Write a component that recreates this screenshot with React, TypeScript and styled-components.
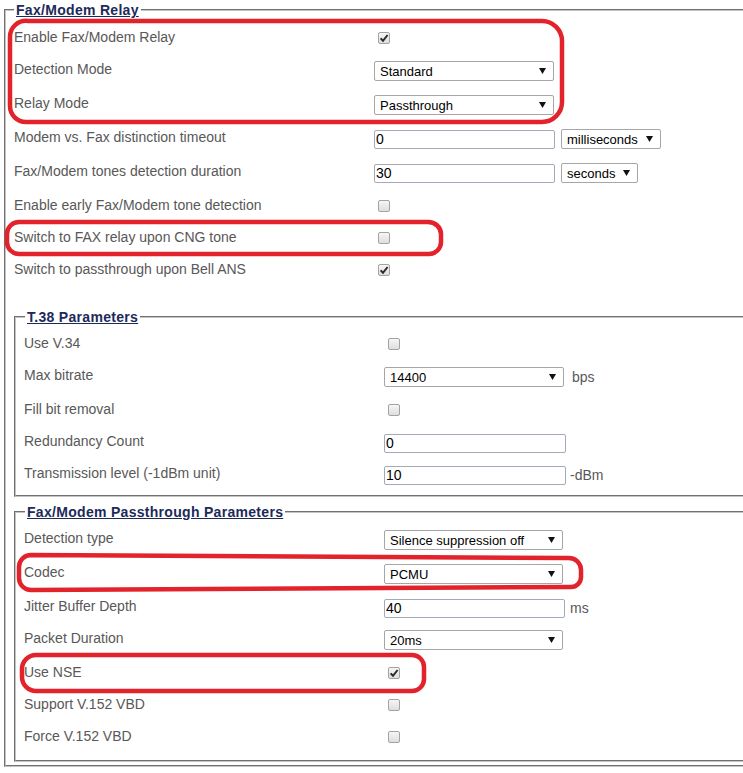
import React from 'react';
import styled, { createGlobalStyle } from 'styled-components';

const Global = createGlobalStyle`
  html, body { margin: 0; padding: 0; background: #fff; overflow: hidden; }
  body { font-family: "Liberation Sans", Arial, sans-serif; }
`;

const Page = styled.div`
  position: relative;
  width: 743px;
  height: 773px;
  overflow: hidden;
  padding: 2px 0 0 4px;
  box-sizing: border-box;
`;

const Fieldset = styled.fieldset<{ $outer?: boolean; $mt?: number }>`
  margin: ${(p) => p.$mt ?? 0}px 0 0 0;
  padding: ${(p) => (p.$outer ? '10px 0 3px 8px' : '9px 0 0 8px')};
  border: 2px groove #c4c4c4;
  width: ${(p) => (p.$outer ? 840 : 810)}px;
  min-width: 0;
  box-sizing: border-box;
`;

const Legend = styled.legend<{ $ml?: number }>`
  margin-left: ${(p) => p.$ml ?? 0}px;
  padding: 0 2px;
  font: bold 14px/16px "Liberation Sans", Arial, sans-serif;
  letter-spacing: 0.3px;
  color: #1c2a5a;
  text-decoration: underline;
`;

const Row = styled.div<{ $h: number }>`
  display: grid;
  grid-template-columns: 360px auto;
  align-items: start;
  height: ${(p) => p.$h}px;
`;

const Label = styled.div`
  padding-top: 1px;
  font-size: 14px;
  line-height: 16px;
  color: #585858;
  white-space: nowrap;
`;

const Control = styled.div<{ $gap?: number }>`
  display: flex;
  align-items: center;
  height: 22px;
  gap: ${(p) => p.$gap ?? 6}px;
`;

const Box = styled.span`
  display: inline-flex;
  align-items: center;
  justify-content: center;
  width: 12px;
  height: 12px;
  margin-left: 4px;
  margin-bottom: 2px;
  box-sizing: border-box;
  border: 1px solid #a3a3a3;
  border-radius: 2px;
  background: linear-gradient(#f6f6f6, #dedede);
`;

const SelectBox = styled.div<{ $w: number }>`
  width: ${(p) => p.$w}px;
  height: 20px;
  box-sizing: border-box;
  border: 1px solid #a6a6a6;
  border-radius: 2px;
  background: #fff;
  display: flex;
  align-items: center;
  justify-content: space-between;
  padding: 0 7px 0 5px;
  font-size: 13px;
  color: #000;
  white-space: nowrap;
`;

const TextInput = styled.input<{ $w: number }>`
  width: ${(p) => p.$w}px;
  height: 19px;
  box-sizing: border-box;
  border: 1px solid #a2abb7;
  border-radius: 2px;
  padding: 0 1px;
  margin: 0;
  font: 14px "Liberation Sans", Arial, sans-serif;
  color: #000;
  background: #fff;
  outline: none;
`;

const Unit = styled.span`
  font-size: 14px;
  color: #585858;
`;

const Overlay = styled.svg`
  position: absolute;
  left: 0;
  top: 0;
  width: 743px;
  height: 773px;
  pointer-events: none;
`;

const Check = ({ checked }: { checked?: boolean }) => (
  <Box>
    {checked && (
      <svg width="10" height="10" viewBox="0 0 10 10">
        <path d="M1.6 5.4 L4 7.8 L8.6 2" fill="none" stroke="#2a2a2a" strokeWidth="2" />
      </svg>
    )}
  </Box>
);

const Select = ({ w, value }: { w: number; value: string }) => (
  <SelectBox $w={w}>
    <span>{value}</span>
    <svg width="7" height="6" viewBox="0 0 7 6">
      <path d="M0 0 H7 L3.5 6 Z" fill="#111" />
    </svg>
  </SelectBox>
);

type Item =
  | { label: string; h: number; kind: 'check'; checked?: boolean }
  | { label: string; h: number; kind: 'select'; w: number; value: string; unit?: string; gap?: number }
  | {
      label: string;
      h: number;
      kind: 'input';
      w: number;
      value: string;
      unit?: string;
      unitSelect?: { w: number; value: string };
      gap?: number;
    };

const relay: Item[] = [
  { label: 'Enable Fax/Modem Relay', h: 32, kind: 'check', checked: true },
  { label: 'Detection Mode', h: 34, kind: 'select', w: 180, value: 'Standard' },
  { label: 'Relay Mode', h: 34, kind: 'select', w: 180, value: 'Passthrough' },
  {
    label: 'Modem vs. Fax distinction timeout',
    h: 34,
    kind: 'input',
    w: 181,
    value: '0',
    unitSelect: { w: 100, value: 'milliseconds' },
    gap: 6,
  },
  {
    label: 'Fax/Modem tones detection duration',
    h: 34,
    kind: 'input',
    w: 181,
    value: '30',
    unitSelect: { w: 77, value: 'seconds' },
    gap: 6,
  },
  { label: 'Enable early Fax/Modem tone detection', h: 32, kind: 'check' },
  { label: 'Switch to FAX relay upon CNG tone', h: 32, kind: 'check' },
  { label: 'Switch to passthrough upon Bell ANS', h: 32, kind: 'check', checked: true },
];

const t38: Item[] = [
  { label: 'Use V.34', h: 32, kind: 'check' },
  { label: 'Max bitrate', h: 34, kind: 'select', w: 180, value: '14400', unit: 'bps', gap: 8 },
  { label: 'Fill bit removal', h: 32, kind: 'check' },
  { label: 'Redundancy Count', h: 32, kind: 'input', w: 182, value: '0' },
  { label: 'Transmission level (-1dBm unit)', h: 31, kind: 'input', w: 182, value: '10', unit: '-dBm', gap: 4 },
];

const passthrough: Item[] = [
  { label: 'Detection type', h: 34, kind: 'select', w: 179, value: 'Silence suppression off' },
  { label: 'Codec', h: 34, kind: 'select', w: 179, value: 'PCMU' },
  { label: 'Jitter Buffer Depth', h: 32, kind: 'input', w: 181, value: '40', unit: 'ms', gap: 5 },
  { label: 'Packet Duration', h: 34, kind: 'select', w: 179, value: '20ms' },
  { label: 'Use NSE', h: 32, kind: 'check', checked: true },
  { label: 'Support V.152 VBD', h: 32, kind: 'check' },
  { label: 'Force V.152 VBD', h: 33, kind: 'check' },
];

const FieldRow = ({ item }: { item: Item }) => {
  let control: React.ReactNode = null;
  if (item.kind === 'check') {
    control = <Check checked={item.checked} />;
  } else if (item.kind === 'select') {
    control = (
      <>
        <Select w={item.w} value={item.value} />
        {item.unit && <Unit>{item.unit}</Unit>}
      </>
    );
  } else {
    control = (
      <>
        <TextInput $w={item.w} defaultValue={item.value} readOnly />
        {item.unitSelect && <Select w={item.unitSelect.w} value={item.unitSelect.value} />}
        {item.unit && <Unit>{item.unit}</Unit>}
      </>
    );
  }
  return (
    <Row $h={item.h}>
      <Label>{item.label}</Label>
      <Control $gap={'gap' in item ? item.gap : undefined}>{control}</Control>
    </Row>
  );
};

const Annotations = () => (
  <Overlay viewBox="0 0 743 773">
    <g fill="none" stroke="#e3232b" strokeWidth="4.5" strokeLinejoin="round">
      <path d="M28 21 H542 A20 20 0 0 1 562 41 V102 A20 20 0 0 1 542 122 H26 A16 16 0 0 1 10 106 V37 A16 16 0 0 1 28 21 Z" />
      <path d="M19 222 H428 A13 12 0 0 1 441 234 V242 A12 12 0 0 1 429 254 H19 A12 12 0 0 1 7 242 V234 A12 12 0 0 1 19 222 Z" />
      <path d="M31 555 L569 558 A12 12 0 0 1 581 570 V577 A10 10 0 0 1 571 587 L31 590 A12 12 0 0 1 19 578 V567 A12 12 0 0 1 31 555 Z" />
      <path d="M36 655 H412 A12 12 0 0 1 424 667 V679 A12 12 0 0 1 412 691 H36 A14 14 0 0 1 22 677 V669 A14 14 0 0 1 36 655 Z" />
    </g>
  </Overlay>
);

export default function App() {
  return (
    <>
      <Global />
      <Page>
        <Fieldset $outer>
          <Legend>Fax/Modem Relay</Legend>
          {relay.map((it) => (
            <FieldRow key={it.label} item={it} />
          ))}
          <Fieldset $mt={17}>
            <Legend $ml={1}>T.38 Parameters</Legend>
            {t38.map((it) => (
              <FieldRow key={it.label} item={it} />
            ))}
          </Fieldset>
          <Fieldset $mt={7}>
            <Legend $ml={1}>Fax/Modem Passthrough Parameters</Legend>
            {passthrough.map((it) => (
              <FieldRow key={it.label} item={it} />
            ))}
          </Fieldset>
        </Fieldset>
        <Annotations />
      </Page>
    </>
  );
}
